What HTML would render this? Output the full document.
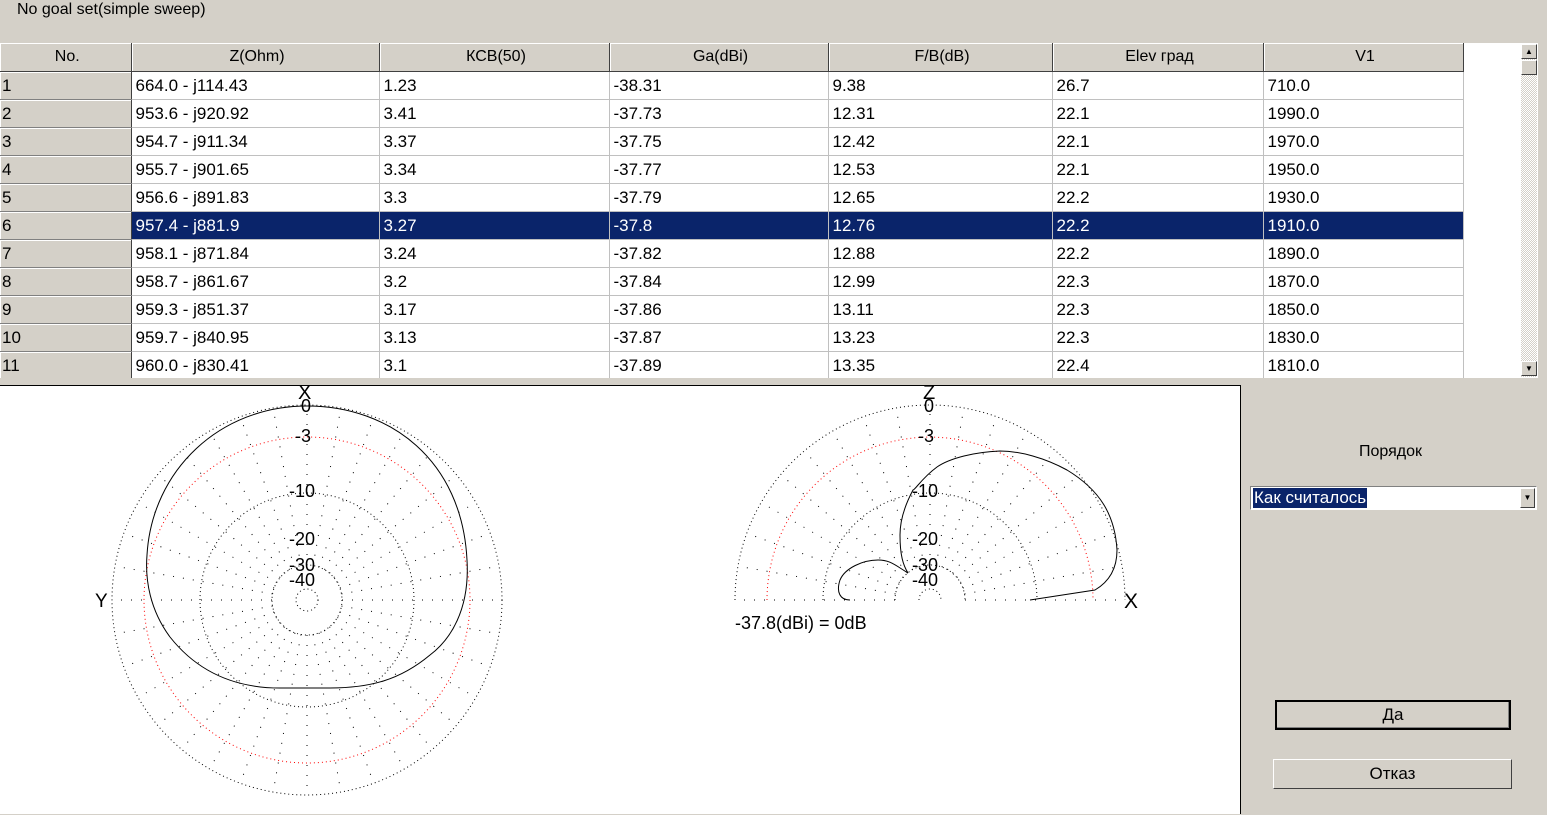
<!DOCTYPE html>
<html><head><meta charset="utf-8"><style>
body{margin:0;width:1547px;height:815px;background:#d4d0c8;font-family:"Liberation Sans",Arial,sans-serif;font-size:16px;position:relative;overflow:hidden;color:#000}
.title{position:absolute;left:17px;top:1px;font-size:16px}
.tbl{position:absolute;left:0;top:43px;width:1538px;height:335px;background:#fff;overflow:hidden}
table{border-collapse:collapse;table-layout:fixed;position:absolute;left:0;top:0}
td,th{height:27px;padding:0 0 0 4px;font-weight:normal;font-size:17px;white-space:nowrap;overflow:hidden;text-align:left;border-right:1px solid #c0c0c0;border-bottom:1px solid #c0c0c0;line-height:27px;box-sizing:border-box}
tr{height:28px}
th{background:#d4d0c8;text-align:center;border-right:1px solid #404040;border-bottom:1px solid #404040;box-shadow:inset 1px 1px 0 #fff;font-size:16px}
td.n{background:#d4d0c8;border-right:1px solid #404040;border-bottom:1px solid #808080;box-shadow:inset 1px 1px 0 #fff;padding-left:2px}
tr.sel td:not(.n){background:#0a246a;color:#fff}
.sb{position:absolute;left:1521px;top:44px;width:16px;height:333px;background:repeating-conic-gradient(#fff 0 25%,#d4d0c8 0 50%) 0 0/2px 2px}
.sbtn{position:absolute;left:1521px;width:16px;height:15px;background:#d4d0c8;border:1px solid;border-color:#fff #404040 #404040 #fff;box-sizing:border-box;font-size:8px;text-align:center;line-height:13px}
.plot{position:absolute;left:0;top:385px;width:1240px;height:428px;background:#fff;border-top:1px solid #000;border-right:1px solid #000}
.lbl{position:absolute;font-size:16px}
.combo{position:absolute;left:1250px;top:486px;width:287px;height:24px;background:#fff;border:1px solid;border-color:#808080 #fff #fff #808080;box-sizing:border-box}
.btn{position:absolute;background:#d4d0c8;text-align:center;font-size:17px;box-sizing:border-box;border:1px solid;border-color:#fff #404040 #404040 #fff}
</style></head><body>
<div class="title">No goal set(simple sweep)</div>
<div class="tbl">
<table>
<colgroup><col style="width:131px"><col style="width:248px"><col style="width:230px"><col style="width:219px"><col style="width:224px"><col style="width:211px"><col style="width:200px"></colgroup>
<tr><th>No.</th><th>Z(Ohm)</th><th>КСВ(50)</th><th>Ga(dBi)</th><th>F/B(dB)</th><th>Elev град</th><th>V1</th></tr>
<tr><td class="n">1</td><td>664.0 - j114.43</td><td>1.23</td><td>-38.31</td><td>9.38</td><td>26.7</td><td>710.0</td></tr>
<tr><td class="n">2</td><td>953.6 - j920.92</td><td>3.41</td><td>-37.73</td><td>12.31</td><td>22.1</td><td>1990.0</td></tr>
<tr><td class="n">3</td><td>954.7 - j911.34</td><td>3.37</td><td>-37.75</td><td>12.42</td><td>22.1</td><td>1970.0</td></tr>
<tr><td class="n">4</td><td>955.7 - j901.65</td><td>3.34</td><td>-37.77</td><td>12.53</td><td>22.1</td><td>1950.0</td></tr>
<tr><td class="n">5</td><td>956.6 - j891.83</td><td>3.3</td><td>-37.79</td><td>12.65</td><td>22.2</td><td>1930.0</td></tr>
<tr class="sel"><td class="n">6</td><td>957.4 - j881.9</td><td>3.27</td><td>-37.8</td><td>12.76</td><td>22.2</td><td>1910.0</td></tr>
<tr><td class="n">7</td><td>958.1 - j871.84</td><td>3.24</td><td>-37.82</td><td>12.88</td><td>22.2</td><td>1890.0</td></tr>
<tr><td class="n">8</td><td>958.7 - j861.67</td><td>3.2</td><td>-37.84</td><td>12.99</td><td>22.3</td><td>1870.0</td></tr>
<tr><td class="n">9</td><td>959.3 - j851.37</td><td>3.17</td><td>-37.86</td><td>13.11</td><td>22.3</td><td>1850.0</td></tr>
<tr><td class="n">10</td><td>959.7 - j840.95</td><td>3.13</td><td>-37.87</td><td>13.23</td><td>22.3</td><td>1830.0</td></tr>
<tr><td class="n">11</td><td>960.0 - j830.41</td><td>3.1</td><td>-37.89</td><td>13.35</td><td>22.4</td><td>1810.0</td></tr>
</table>
</div>
<div class="sb"></div>
<div class="sbtn" style="top:44px">▲</div>
<div class="sbtn" style="top:60px"></div>
<div class="sbtn" style="top:361px">▼</div>
<div class="plot"></div>
<svg style="position:absolute;left:0;top:0" width="1547" height="815" id="s" font-family="Liberation Sans,Arial,sans-serif" font-size="18">
<g id="grid" fill="none" stroke="#000" stroke-width="1"></g>
<path d="M307 406 C390 406 462 460 467 560 C470 610 450 640 430 655 C400 680 370 688 330 688 L280 688 C240 688 200 675 170 637 C150 610 145 580 147 555 C152 470 220 406 307 406 Z" fill="none" stroke="#000"/>
<path d="M1030 600 L1095 590 C1112 580 1117 565 1117 550 C1115 515 1100 490 1067 470 C1045 458 1020 451 1000 451 C975 452 950 458 937 467 C922 478 915 490 913 490 C905 505 900 520 900 535 C900 555 903 565 908 573 C895 565 890 560 878 560 C863 560 845 568 840 580 C836 592 840 600 850 600" fill="none" stroke="#000"/>
<g font-size="18">
<text x="298" y="399" font-size="20">X</text><text x="301" y="412">0</text>
<text x="295" y="442">-3</text><text x="289" y="497">-10</text><text x="289" y="545">-20</text><text x="289" y="571">-30</text><text x="289" y="586">-40</text>
<text x="95" y="607" font-size="19">Y</text>
<text x="923" y="399" font-size="20">Z</text><text x="924" y="412">0</text>
<text x="918" y="442">-3</text><text x="912" y="497">-10</text><text x="912" y="545">-20</text><text x="912" y="571">-30</text><text x="912" y="586">-40</text>
<text x="1124" y="608" font-size="21">X</text>
<text x="735" y="629">-37.8(dBi) = 0dB</text>
</g>
</svg>
<div class="lbl" style="left:1359px;top:443px">Порядок</div>
<div class="combo"><span style="position:absolute;left:2px;top:1px;background:#0a246a;color:#fff;padding:0 1px;line-height:20px;font-size:17px">Как считалось</span><div style="position:absolute;right:1px;top:1px;width:15px;height:20px;background:#d4d0c8;border:1px solid;border-color:#fff #404040 #404040 #fff;box-sizing:border-box;font-size:8px;text-align:center;line-height:18px">▼</div></div>
<div class="btn" style="left:1275px;top:700px;width:236px;height:30px;border:2px solid #000;box-shadow:inset -1px -1px 0 #808080;line-height:26px">Да</div>
<div class="btn" style="left:1273px;top:759px;width:239px;height:30px;line-height:28px">Отказ</div>
<script>
var g=document.getElementById('grid'),ns='http://www.w3.org/2000/svg';
function el(t,a){var e=document.createElementNS(ns,t);for(var k in a)e.setAttribute(k,a[k]);g.appendChild(e);return e;}
var R=[195,163,107,35,11];
[[307,600,0],[930,600,1]].forEach(function(p){
 var cx=p[0],cy=p[1],half=p[2];
 R.forEach(function(r,i){
  var st=i==1?'red':'#000';
  if(!half) el('circle',{cx:cx,cy:cy,r:r,stroke:st,'stroke-dasharray':'1 3'});
  else el('path',{d:'M'+(cx-r)+' '+cy+' A'+r+' '+r+' 0 0 1 '+(cx+r)+' '+cy,stroke:st,'stroke-dasharray':'1 3'});
 });
 for(var a=0;a<360;a+=10){
  if(half&&a>180)continue;
  var t=a*Math.PI/180;
  el('line',{x1:cx+35*Math.cos(t),y1:cy-35*Math.sin(t),x2:cx+195*Math.cos(t),y2:cy-195*Math.sin(t),'stroke-dasharray':'1 9'});
 }
});
</script>
</body></html>
